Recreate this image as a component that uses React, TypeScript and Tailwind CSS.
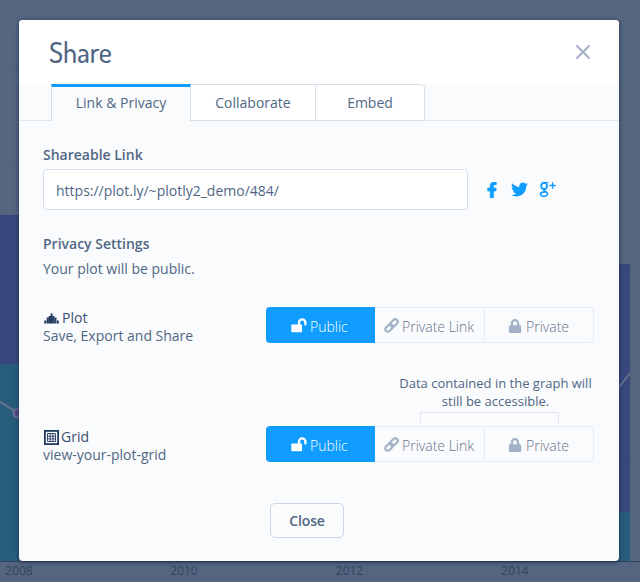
import React from "react";
import { FaFacebookF, FaTwitter, FaLock } from "react-icons/fa";

function ChartBackdrop() {
  return (
    <svg className="absolute inset-0" width="640" height="582" viewBox="0 0 640 582">
      <rect width="640" height="582" fill="#55657f" />
      <g stroke="#50607b" strokeWidth="1">
        <path d="M0 66.5H640M0 165.5H640M0 264.5H640M0 363.5H640M0 462.5H640" />
      </g>
      <rect x="0" y="215" width="20" height="149" fill="#38477c" />
      <rect x="0" y="364" width="20" height="198" fill="#285c7b" />
      <rect x="618" y="264" width="12" height="248" fill="#38477c" />
      <rect x="618" y="512" width="12" height="50" fill="#285c7b" />
      <path d="M-2 400.500L18 413" stroke="#66718d" strokeWidth="2" />
      <circle cx="18" cy="413" r="4.500" fill="#57468a" stroke="#66718d" strokeWidth="2" />
      <path d="M617 390L630 373" stroke="#66748c" strokeWidth="1.800" />
      <path d="M0 561.500H640" stroke="#34435f" />
      <g fill="#34435e" fontFamily="'Open Sans', sans-serif" fontSize="12" textAnchor="middle">
        <text x="19" y="574.500">2008</text>
        <text x="184" y="574.500">2010</text>
        <text x="349.500" y="574.500">2012</text>
        <text x="515" y="574.500">2014</text>
      </g>
    </svg>
  );
}

function GooglePlus() {
  return (
    <svg width="18" height="17" viewBox="0 0 18 17" fill="none" stroke="#119dff">
      <ellipse cx="5.100" cy="5" rx="2.900" ry="3.300" strokeWidth="1.900" />
      <path d="M5.400 1.500H9.400" strokeWidth="1.200" />
      <path d="M6.500 8C4 8.800 4.800 9.500 6.500 10.400C10.200 12.200 8.500 15.300 5 15.300C1 15.300 .3 12.500 3 11.400C4 11 5 10.900 6.200 10.800" strokeWidth="1.700" />
      <path d="M10.400 4.500H16.800M13.600 1.300V7.700" strokeWidth="1.300" />
    </svg>
  );
}

function OpenLock() {
  return (
    <svg width="16" height="15" viewBox="0 0 16 15">
      <rect x="0.300" y="6.500" width="10.700" height="7.800" rx="0.700" fill="#fff" />
      <path d="M8 7.500V4.600a3.200 3.200 0 0 1 6.400 0V6.400" fill="none" stroke="#fff" strokeWidth="2.300" strokeLinecap="round" />
    </svg>
  );
}

function ChainLink() {
  return (
    <svg width="15" height="15" viewBox="0 0 15 15" fill="none" stroke="#a2b1c6" strokeWidth="2.200">
      <g transform="rotate(-45 7.500 7.500)">
        <rect x="-0.300" y="5" width="8.600" height="5" rx="2.500" />
        <rect x="6.700" y="5" width="8.600" height="5" rx="2.500" />
      </g>
    </svg>
  );
}

function PlotIcon() {
  return (
    <svg width="15" height="11" viewBox="0 0 15 11" fill="#243b61">
      <path d="M0.300 7.500h2v3h-2zM2.700 4.500h1.900v6H2.700zM4.700 3h1.900v7.500H4.700zM6.600 .5h2v10h-2zM8.700 3h1.700v7.500H8.700zM10.600 4.500h1.900v6h-1.900zM12.900 7.500h1.900v3h-1.900z" />
    </svg>
  );
}

function GridIcon() {
  return (
    <svg width="15" height="15" viewBox="0 0 15 15" fill="none" stroke="#243b61">
      <rect x="0.900" y="0.900" width="13.200" height="13.200" strokeWidth="1.800" />
      <path d="M3.500 3.500h8v8h-8zM6.200 3v9M8.900 3v9M3 6.200h9M3 8.900h9" strokeWidth="0.900" />
    </svg>
  );
}

function PrivacyButtons() {
  return (
    <div className="mr-px flex h-9 w-[328px] text-[14px] font-light text-[#69738a]">
      <div className="flex w-[109px] items-center rounded-l-[4px] bg-[#119dff] pl-[25px] pt-px text-white">
        <OpenLock />
        <span className="ml-[3px] mt-[2px]">Public</span>
      </div>
      <div className="flex w-[110px] items-center border-y border-r border-[#e5ecf6] pl-[9px] pt-px">
        <ChainLink />
        <span className="ml-[3px] mt-[2px] whitespace-nowrap">Private Link</span>
      </div>
      <div className="flex w-[109px] items-center rounded-r-[4px] border-y border-r border-[#e5ecf6] pl-[23px] pt-px">
        <FaLock size={14} color="#a2b1c6" />
        <span className="ml-[4px] mt-[2px]">Private</span>
      </div>
    </div>
  );
}

export default function App() {
  return (
    <div className="relative h-[582px] w-[640px] overflow-hidden font-['Open_Sans',sans-serif] text-[14px] leading-[18px] text-[#506784]">
      <ChartBackdrop />
      <div className="relative ml-[19px] mt-5 flex h-[541px] w-[600px] flex-col overflow-hidden rounded-[4px] bg-[#fafbfd] shadow-[0_1px_4px_#1d2d50]">
        <header className="flex h-16 shrink-0 items-center justify-between bg-white pl-[30px] pr-[29px]">
          <h1 className="font-['Dosis','Open_Sans',sans-serif] text-[28px] font-medium leading-8 text-[#506784]">Share</h1>
          <svg width="14" height="14" viewBox="0 0 14 14" stroke="#a2b1c6" strokeWidth="2" strokeLinecap="round">
            <path d="M1 1L13 13M13 1L1 13" />
          </svg>
        </header>
        <nav className="flex h-[37px] shrink-0">
          <div className="w-8 border-b border-[#dfe8f3]" />
          <div className="flex w-[140px] items-center justify-center border-x border-t-[3px] border-x-[#d5dfec] border-t-[#119dff] pb-[2px]">Link &amp; Privacy</div>
          <div className="flex w-[124px] items-center justify-center border-y border-[#d5dfec] bg-white">Collaborate</div>
          <div className="flex w-[110px] items-center justify-center rounded-tr-[4px] border border-[#d5dfec] bg-white">Embed</div>
          <div className="grow border-b border-[#dfe8f3]" />
        </nav>
        <main className="flex grow flex-col px-6">
          <h2 className="mt-[25px] font-semibold">Shareable Link</h2>
          <div className="mt-[5px] flex items-center">
            <div className="flex h-[41px] w-[425px] items-center rounded-[4px] border border-[#d5dfec] bg-white pl-3 pt-[2px]">https://plot.ly/~plotly2_demo/484/</div>
            <div className="ml-[16px] flex items-center text-[#119dff]">
              <FaFacebookF size={16} strokeWidth={24} />
              <FaTwitter size={17} className="ml-[11px]" />
              <span className="ml-[11px]"><GooglePlus /></span>
            </div>
          </div>
          <h2 className="mt-[25px] font-semibold">Privacy Settings</h2>
          <p className="mt-[7px]">Your plot will be public.</p>
          <div className="mt-[29px] flex justify-between">
            <div className="pt-[2px]">
              <div className="flex items-center pl-px text-[#3b4f72]"><PlotIcon /><span className="ml-[3px]">Plot</span></div>
              <div>Save, Export and Share</div>
            </div>
            <PrivacyButtons />
          </div>
          <div className="mr-[3px] mt-[29px] flex w-[193px] flex-col items-center self-end text-center text-[13px] leading-[18px]">
            <p className="whitespace-nowrap">Data contained in the graph will<br />still be accessible.</p>
            <div className="-ml-3 mt-[2px] h-[11px] w-[139px] border-x border-t border-[#e2e6ec]" />
          </div>
          <div className="mt-[3px] flex justify-between">
            <div className="pt-[2px]">
              <div className="flex items-center pl-px text-[#3b4f72]"><GridIcon /><span className="ml-[2px]">Grid</span></div>
              <div>view-your-plot-grid</div>
            </div>
            <PrivacyButtons />
          </div>
          <button className="ml-[227px] mt-[39px] h-[35px] w-[74px] rounded-[5px] border border-[#cbd7e6] pt-px font-semibold tracking-[-0.01em]">Close</button>
        </main>
      </div>
    </div>
  );
}
